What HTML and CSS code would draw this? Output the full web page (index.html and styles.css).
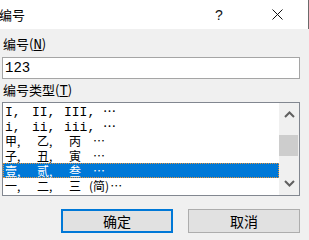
FILE: index.html
```html
<!DOCTYPE html>
<html>

<head>
    <title>编号</title>
    <link rel="stylesheet" href="styles.css">
</head>

<body>
    <div class="dialog">
        <div class="titlebar">
            <span class="title">编号</span>
            <span class="title-btn">?</span>
            <span class="title-btn close">
                <svg width="11" height="11" viewBox="0 0 11 11">
                    <path d="M0.5 0.5 L10.5 10.5 M10.5 0.5 L0.5 10.5" stroke="#111" stroke-width="1" fill="none" />
                </svg>
            </span>
        </div>

        <div class="content">
            <label class="field-label">编号(<u>N</u>)</label>
            <div class="textbox">123</div>

            <label class="field-label second">编号类型(<u>T</u>)</label>
            <div class="listbox">
                <div class="items">
                    <div class="row roman"><span class="cell">I,</span><span class="cell">II,</span><span class="cell">III,</span><span class="dots">…</span></div>
                    <div class="row roman"><span class="cell">i,</span><span class="cell">ii,</span><span class="cell">iii,</span><span class="dots">…</span></div>
                    <div class="row"><span class="cell">甲,</span><span class="cell">乙,</span><span class="cell">丙</span><span class="dots">…</span></div>
                    <div class="row"><span class="cell">子,</span><span class="cell">丑,</span><span class="cell">寅</span><span class="dots">…</span></div>
                    <div class="row selected"><span class="cell">壹,</span><span class="cell">贰,</span><span class="cell">叁</span><span class="dots">…</span></div>
                    <div class="row"><span class="cell">一,</span><span class="cell">二,</span><span class="cell">三</span><span class="note">(简)</span><span class="dots">…</span></div>
                </div>
                <div class="scrollbar">
                    <svg class="arrow" width="11" height="7" viewBox="0 0 11 7">
                        <path d="M1 6 L5.5 1.5 L10 6" stroke="#606060" stroke-width="2" fill="none" />
                    </svg>
                    <div class="thumb"></div>
                    <svg class="arrow down" width="11" height="7" viewBox="0 0 11 7">
                        <path d="M1 1 L5.5 5.5 L10 1" stroke="#606060" stroke-width="2" fill="none" />
                    </svg>
                </div>
            </div>

            <div class="buttons">
                <button class="default">确定</button>
                <button>取消</button>
            </div>
        </div>
    </div>
</body>

</html>
```

FILE: styles.css
```css
body {
    margin: 0;
    padding: 0;
    font-family: "Noto Sans CJK SC", sans-serif;
    background-color: #f0f0f0;
    color: #000;
}

.dialog {
    width: 309px;
    height: 240px;
    overflow: hidden;
    background-color: #f0f0f0;
}

.titlebar {
    height: 29px;
    background-color: #ffffff;
    display: flex;
    align-items: center;
    border-right: 1px solid #6b6b6b;
    box-sizing: border-box;
}

.title {
    font-size: 13px;
    margin-left: -1px;
    flex: 1;
}

.title-btn {
    width: 46px;
    text-align: center;
    font-family: "Liberation Sans", sans-serif;
    font-size: 14px;
    color: #111;
}

.title-btn.close {
    display: flex;
    justify-content: center;
    margin-left: 12px;
    margin-right: 8px;
}

.content {
    padding: 7px 0 0 2px;
}

.field-label {
    display: block;
    font-size: 13px;
    line-height: 15px;
    height: 15px;
    padding-left: 1px;
}

.field-label u {
    font-family: "Liberation Mono", monospace;
    font-size: 14px;
}

.field-label.second {
    margin-top: 3px;
}

.textbox {
    margin-top: 6px;
    width: 298px;
    height: 22px;
    box-sizing: border-box;
    border: 1px solid #a5a5a5;
    background-color: #ffffff;
    font-family: "Liberation Mono", monospace;
    font-size: 14px;
    line-height: 20px;
    padding-left: 2px;
}

.listbox {
    margin-top: 5px;
    width: 298px;
    height: 94px;
    box-sizing: border-box;
    border: 1px solid #828790;
    background-color: #ffffff;
    display: flex;
    overflow: hidden;
}

.items {
    flex: 1;
}

.row {
    height: 15px;
    line-height: 15px;
    font-size: 12px;
    padding-left: 2px;
    white-space: nowrap;
    box-sizing: border-box;
}

.row.roman {
    font-family: "Liberation Mono", "Noto Sans CJK SC", monospace;
    font-size: 13px;
}

.cell {
    display: inline-block;
    width: 32px;
}

.roman .cell:first-child {
    width: 27px;
}

.note {
    margin-left: -12px;
}

.dots {
    font-family: "Noto Sans CJK SC", sans-serif;
    margin-left: -8px;
}

.note + .dots {
    margin-left: 1px;
}

.roman .dots {
    margin-left: 7px;
}

.row.selected {
    background-color: #0078d7;
    color: #ffffff;
    border: 1px dotted #e8943a;
    padding-left: 1px;
    line-height: 13px;
}

.scrollbar {
    width: 20px;
    background-color: #f0f0f0;
    display: flex;
    flex-direction: column;
    align-items: flex-start;
}

.arrow {
    margin: 8px 0 0 5px;
}

.thumb {
    width: 19px;
    height: 21px;
    margin-top: 17px;
    background-color: #cdcdcd;
}

.arrow.down {
    margin-top: 24px;
}

.buttons {
    display: flex;
    justify-content: flex-end;
    gap: 15px;
    margin-top: 13px;
    padding-right: 9px;
}

button {
    width: 112px;
    height: 24px;
    box-sizing: border-box;
    background-color: #e1e1e1;
    border: 1px solid #adadad;
    font-family: "Noto Sans CJK SC", sans-serif;
    font-size: 14px;
    padding: 0;
    color: #000;
}

button.default {
    border: 2px solid #0078d7;
}
```
